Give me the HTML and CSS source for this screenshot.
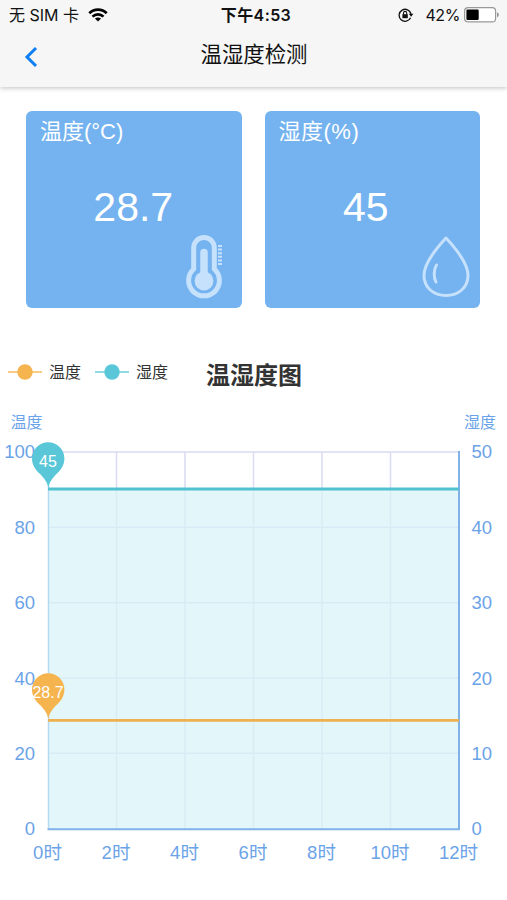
FILE: index.html
```html
<!DOCTYPE html>
<html lang="zh-CN">
<head>
  <meta charset="UTF-8" />
  <meta name="viewport" content="width=device-width, initial-scale=1.0"/>
  <title>温湿度检测</title>
  <link rel="stylesheet" href="styles.css">
</head>
<body>
  <header class="header">
    <div class="status-bar">
      <div class="status-left">
        <span>无 SIM 卡</span>
        <svg class="wifi" width="20" height="14" viewBox="0 0 20 14" fill="none" stroke="#000" stroke-width="2.7">
          <path d="M1.3 5.2C6.2 0.3 13.8 0.3 18.7 5.2"/>
          <path d="M4.5 8.6C7.6 5.6 12.4 5.6 15.5 8.6"/>
          <path d="M10 13.6L6.9 10.6C8.7 9 11.3 9 13.1 10.6Z" fill="#000" stroke="none"/>
        </svg>
      </div>
      <div class="status-time">下午4:53</div>
      <div class="status-right">
        <svg class="lock" width="16" height="14" viewBox="0 0 16 14" fill="none" stroke="#111">
          <path d="M12.6 9.8A6 6 0 1 1 13 6" stroke-width="1.3"/>
          <path d="M10.8 5.8H15.4L13.1 8.8Z" fill="#111" stroke="none"/>
          <rect x="4.4" y="6.2" width="5.4" height="4" fill="#111" stroke="none"/>
          <path d="M5.5 6.4V5a1.6 1.6 0 0 1 3.2 0V6.4" stroke-width="1.1"/>
        </svg>
        <span>42%</span>
        <svg class="battery" width="36" height="16" viewBox="0 0 36 16">
          <rect x="0.6" y="0.7" width="31" height="14.2" rx="3.5" fill="#fff" stroke="#999" stroke-width="1.2"/>
          <rect x="2.4" y="2.6" width="12.3" height="10.4" rx="1.2" fill="#000"/>
          <path d="M33 5.3C35.5 6 35.5 9.6 33 10.3Z" fill="#999"/>
        </svg>
      </div>
    </div>
    <div class="nav-bar">
      <svg class="back" width="14" height="22" viewBox="0 0 14 22" fill="none" stroke="#0f7ff5" stroke-width="3">
        <path d="M12 2L3 11L12 20"/>
      </svg>
      <h1>温湿度检测</h1>
    </div>
  </header>

  <div class="cards">
    <div class="card">
      <div class="card-title celsius">温度(°C)</div>
      <div class="card-value">28.7</div>
      <svg class="card-icon" width="38" height="66" viewBox="0 0 38 66" fill="none" stroke="#c6e1fb">
        <path d="M8.7 35V13.700a10.300 10.300 0 0 1 20.600 0V35A15.400 15.400 0 1 1 8.700 35Z" stroke-width="5"/>
        <path d="M19 18.500V45" stroke-width="7.500" stroke-linecap="round"/>
        <circle cx="19" cy="47" r="9.4" fill="#c6e1fb" stroke="none"/>
        <path d="M35 11V31.500" stroke-width="4" stroke-dasharray="2 1.600"/>
      </svg>
    </div>
    <div class="card">
      <div class="card-title percent">湿度(%)</div>
      <div class="card-value">45</div>
      <svg class="card-icon drop" width="48" height="62" viewBox="0 0 48 62" fill="none" stroke="#c6e1fb" stroke-linecap="round" stroke-linejoin="round">
        <path d="M24 2C17 9.5 2 26 2 39.5C2 51.5 11.5 59.5 24 59.5S46 51.5 46 39.5C46 26 31 9.5 24 2Z" stroke-width="3"/>
        <path d="M14.500 29C11.500 33.500 11.500 41.500 14 46" stroke-width="3"/>
      </svg>
    </div>
  </div>

  <div class="chart-header">
    <div class="legend">
      <div class="legend-item">
        <svg width="34" height="16" viewBox="0 0 34 16">
          <path d="M0 8H34" stroke="#f9cc7f" stroke-width="2"/>
          <circle cx="17" cy="8" r="7.7" fill="#f5b44e"/>
        </svg>
        <span>温度</span>
      </div>
      <div class="legend-item">
        <svg width="34" height="16" viewBox="0 0 34 16">
          <path d="M0 8H34" stroke="#8fdbe4" stroke-width="2"/>
          <circle cx="17" cy="8" r="7.7" fill="#59c7d8"/>
        </svg>
        <span>湿度</span>
      </div>
    </div>
    <h2>温湿度图</h2>
  </div>

  <svg class="chart" width="507" height="480" viewBox="0 0 507 480">
    <!-- 坐标轴名称 -->
    <g class="axis-name">
      <text x="10.5" y="28">温度</text>
      <text x="464" y="28">湿度</text>
    </g>

    <!-- 网格 -->
    <path class="grid" d="M48 52H459M48 127.3H459M48 202.7H459M48 278H459M48 353.3H459M116.5 52V429M185 52V429M253.5 52V429M322 52V429M390.5 52V429"/>

    <!-- 面积 -->
    <rect class="area" x="48" y="89" width="411" height="340"/>
    <path class="left-axis" d="M48.5 52V429"/>
    <path class="axis" d="M47.5 429.3H459V51"/>

    <!-- 左侧刻度 -->
    <g class="label" text-anchor="end">
      <text x="35" y="58">100</text>
      <text x="35" y="133.5">80</text>
      <text x="35" y="209">60</text>
      <text x="35" y="284.5">40</text>
      <text x="35" y="360">20</text>
      <text x="35" y="435">0</text>
    </g>

    <!-- 右侧刻度 -->
    <g class="label">
      <text x="471.5" y="58">50</text>
      <text x="471.5" y="133.5">40</text>
      <text x="471.5" y="209">30</text>
      <text x="471.5" y="284.5">20</text>
      <text x="471.5" y="360">10</text>
      <text x="471.5" y="435">0</text>
    </g>

    <!-- 时间 -->
    <g class="label" text-anchor="middle">
      <text x="47.5" y="458.5">0时</text>
      <text x="116" y="458.5">2时</text>
      <text x="184.5" y="458.5">4时</text>
      <text x="253" y="458.5">6时</text>
      <text x="321.5" y="458.5">8时</text>
      <text x="390" y="458.5">10时</text>
      <text x="458.5" y="458.5">12时</text>
    </g>

    <path d="M48 89H459" stroke="#52c1cf" stroke-width="2.8"/>
    <path d="M48 320.3H459" stroke="#efb14e" stroke-width="2.8"/>

    <!-- 标记点 -->
    <g class="pin">
      <path d="M48.3 89C48 83 44.5 78.5 39.5 73.5C35 69.5 32 64.5 32 58.5A16.2 16.2 0 0 1 64.4 58.5C64.4 64.5 61.5 69.5 57 73.5C52 78.5 48.6 83 48.3 89Z" fill="#59c7d8"/>
      <text x="48" y="67">45</text>
      <path d="M48.3 320C48 314 44.5 309.5 39.5 304.5C35 300.5 32 295.5 32 289.5A16.2 16.2 0 0 1 64.4 289.5C64.4 295.5 61.5 300.5 57 304.5C52 309.5 48.6 314 48.3 320Z" fill="#f5b44e"/>
      <text x="48" y="298">28.7</text>
    </g>
  </svg>
</body>
</html>
```
FILE: styles.css
```css
body {
  margin: 0;
  background: #fff;
  font-family: "Liberation Sans", "Noto Sans CJK SC", sans-serif;
}

.header {
  height: 87px;
  background: #f6f6f6;
  box-shadow: 0 1px 5px rgba(0, 0, 0, 0.25);
}

.status-bar {
  display: grid;
  grid-template-columns: 1fr auto 1fr;
  align-items: center;
  height: 30px;
  padding: 0 7px 0 9px;
  font-family: Inter, "Noto Sans CJK SC", sans-serif;
  font-size: 16px;
  line-height: 30px;
  color: #111;
}

.status-left,
.status-right {
  display: flex;
  align-items: center;
}

.wifi {
  margin-left: 9px;
}

.status-time {
  padding-left: 3px;
  font-weight: 600;
  letter-spacing: 0.4px;
}

.status-right {
  justify-content: flex-end;
}

.status-right span {
  letter-spacing: -0.4px;
}

.lock {
  margin-right: 11px;
}

.battery {
  margin-left: 4px;
}

.nav-bar {
  display: grid;
  grid-template-columns: 1fr auto 1fr;
  align-items: center;
  height: 50px;
  padding: 0 24px;
}

.back {
  margin-top: 3px;
}

.nav-bar h1 {
  margin: 0;
  padding-left: 1px;
  font-size: 21.4px;
  font-weight: 400;
  line-height: 50px;
  color: #111;
}

.cards {
  display: flex;
  gap: 23px;
  padding: 24px 27px 0 26px;
}

.card {
  display: flex;
  flex-direction: column;
  flex: 1;
  height: 197px;
  border-radius: 6px;
  background: #74b3f0;
  color: #fff;
}

.card-title {
  padding-left: 14px;
  font-size: 22px;
  line-height: 42px;
}

.percent {
  letter-spacing: 0.5px;
}

.card-value {
  margin-top: 30px;
  padding-right: 1px;
  font-size: 41px;
  line-height: 48px;
  text-align: center;
}

.card:last-child .card-value {
  padding-right: 13px;
}

.card-icon {
  align-self: flex-end;
  margin: auto 19px 8px 0;
}

.drop {
  margin: auto 10px 10px 0;
}

.chart-header {
  display: flex;
  margin-top: 52px;
  height: 40px;
  padding-left: 8px;
}

.legend {
  display: flex;
  gap: 14px;
  height: 24px;
}

.legend-item {
  display: flex;
  align-items: center;
  gap: 7px;
  font-size: 16px;
  color: #333;
}

.legend-item span {
  margin-top: -2px;
}

.chart-header h2 {
  margin: 0 0 0 38px;
  font-size: 24px;
  line-height: 32px;
  color: #333;
}

.chart {
  display: block;
}

.axis-name {
  font-size: 16px;
  fill: #6ba3e8;
}

.label {
  font-size: 18.5px;
  fill: #6ba3e8;
}

.grid {
  fill: none;
  stroke: #d9dcf4;
  stroke-width: 1.5;
}

.area {
  fill: rgba(216, 243, 246, 0.72);
}

.left-axis {
  stroke: #b4d9f2;
  stroke-width: 1.5;
}

.axis {
  fill: none;
  stroke: #80b1e8;
  stroke-width: 2;
}

.pin {
  font-size: 16px;
  text-anchor: middle;
}

.pin text {
  fill: #fff;
}
```
